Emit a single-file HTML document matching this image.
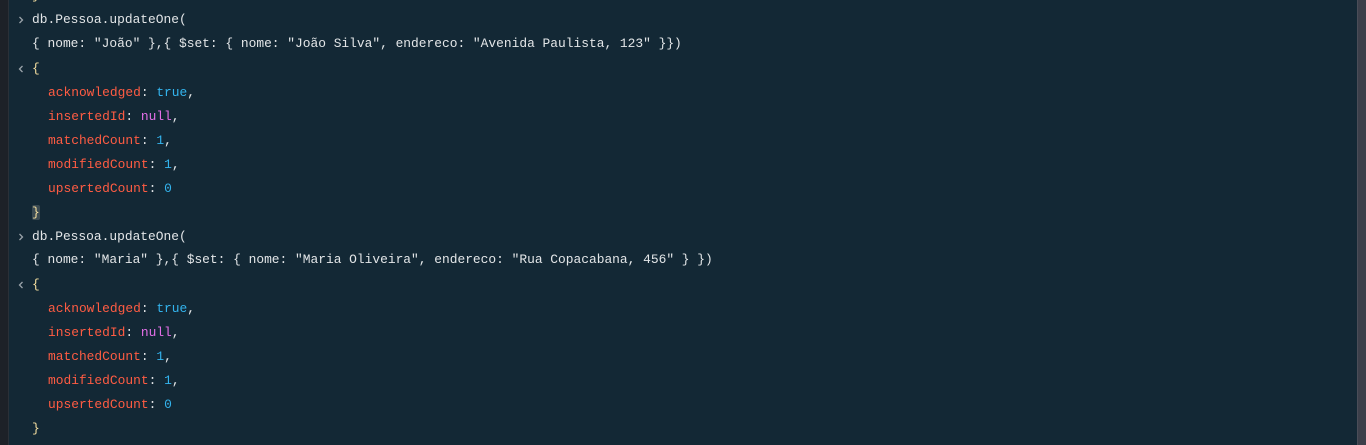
<!DOCTYPE html>
<html><head><meta charset="utf-8"><style>
html,body{margin:0;padding:0;width:1366px;height:445px;overflow:hidden;background:#132835;}
.strip{position:absolute;left:0;top:0;width:8px;height:445px;background:#1d2128;border-right:1px solid #2a3038;}
.sb{position:absolute;right:0;top:0;width:8px;height:445px;background:#3c3f4a;border-left:1px solid #4a4d58;}
.l{position:absolute;left:32px;font-family:"Liberation Mono",monospace;font-size:12.9px;color:#e3e6e8;white-space:pre;line-height:16px;}
.k{color:#ff5c43}.b{color:#33b4ee}.n{color:#e46fe8}.y{color:#f5dfa0}
.ind{left:48px}
.ch{position:absolute;left:17px;width:8px;height:8px;}
.hl{background:#3a4a52;border-radius:2px}
</style></head><body>
<div class="strip"></div><div class="sb"></div>
<div class="l y" style="top:-12px">}</div>
<svg class="ch" style="top:16px" viewBox="0 0 8 8"><path d="M2.5 1 L5.5 4 L2.5 7" stroke="#9aa3aa" stroke-width="1.3" fill="none"/></svg>
<div class="l" style="top:12px">db.Pessoa.updateOne(</div>
<div class="l" style="top:36px">{ nome: "João" },{ $set: { nome: "João Silva", endereco: "Avenida Paulista, 123" }})</div>
<svg class="ch" style="top:65px" viewBox="0 0 8 8"><path d="M5.5 1 L2.5 4 L5.5 7" stroke="#9aa3aa" stroke-width="1.3" fill="none"/></svg>
<div class="l y" style="top:61px">{</div>
<div class="l ind" style="top:85px"><span class="k">acknowledged</span>: <span class="b">true</span>,</div>
<div class="l ind" style="top:109px"><span class="k">insertedId</span>: <span class="n">null</span>,</div>
<div class="l ind" style="top:133px"><span class="k">matchedCount</span>: <span class="b">1</span>,</div>
<div class="l ind" style="top:157px"><span class="k">modifiedCount</span>: <span class="b">1</span>,</div>
<div class="l ind" style="top:181px"><span class="k">upsertedCount</span>: <span class="b">0</span></div>
<div class="l y" style="top:205px"><span class="hl">}</span></div>
<svg class="ch" style="top:233px" viewBox="0 0 8 8"><path d="M2.5 1 L5.5 4 L2.5 7" stroke="#9aa3aa" stroke-width="1.3" fill="none"/></svg>
<div class="l" style="top:229px">db.Pessoa.updateOne(</div>
<div class="l" style="top:252px">{ nome: "Maria" },{ $set: { nome: "Maria Oliveira", endereco: "Rua Copacabana, 456" } })</div>
<svg class="ch" style="top:281px" viewBox="0 0 8 8"><path d="M5.5 1 L2.5 4 L5.5 7" stroke="#9aa3aa" stroke-width="1.3" fill="none"/></svg>
<div class="l y" style="top:277px">{</div>
<div class="l ind" style="top:301px"><span class="k">acknowledged</span>: <span class="b">true</span>,</div>
<div class="l ind" style="top:325px"><span class="k">insertedId</span>: <span class="n">null</span>,</div>
<div class="l ind" style="top:349px"><span class="k">matchedCount</span>: <span class="b">1</span>,</div>
<div class="l ind" style="top:373px"><span class="k">modifiedCount</span>: <span class="b">1</span>,</div>
<div class="l ind" style="top:397px"><span class="k">upsertedCount</span>: <span class="b">0</span></div>
<div class="l y" style="top:421px">}</div>
</body></html>
